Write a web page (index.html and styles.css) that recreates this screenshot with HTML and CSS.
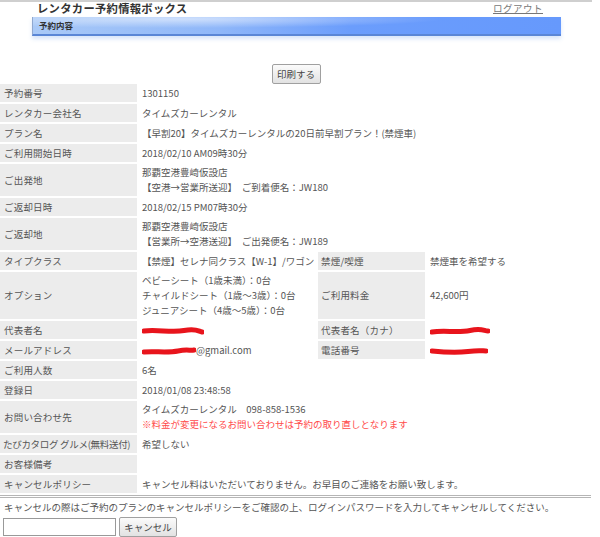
FILE: index.html
```html
<!DOCTYPE html>
<html lang="ja">
<head>
    <meta charset="UTF-8">
    <title>レンタカー予約情報ボックス</title>
    <link rel="stylesheet" href="styles.css">
</head>
<body>
    <!-- ヘッダー -->
    <header class="top">
        <h1>レンタカー予約情報ボックス</h1>
        <a href="#" class="logout">ログアウト</a>
    </header>
    <div class="bar">予約内容</div>

    <div class="print-area">
        <button type="button" class="btn-print">印刷する</button>
    </div>

    <!-- 予約内容 -->
    <table class="detail">
        <colgroup>
            <col class="c-label">
            <col class="c-value">
            <col class="c-label2">
            <col>
        </colgroup>
        <tr>
            <th>予約番号</th>
            <td colspan="3">1301150</td>
        </tr>
        <tr>
            <th>レンタカー会社名</th>
            <td colspan="3">タイムズカーレンタル</td>
        </tr>
        <tr>
            <th>プラン名</th>
            <td colspan="3">【早割20】タイムズカーレンタルの20日前早割プラン！(禁煙車)</td>
        </tr>
        <tr>
            <th>ご利用開始日時</th>
            <td colspan="3">2018/02/10 AM09時30分</td>
        </tr>
        <tr>
            <th>ご出発地</th>
            <td colspan="3">那覇空港豊崎仮設店<br>【空港→営業所送迎】　ご到着便名：JW180</td>
        </tr>
        <tr>
            <th>ご返却日時</th>
            <td colspan="3">2018/02/15 PM07時30分</td>
        </tr>
        <tr>
            <th>ご返却地</th>
            <td colspan="3">那覇空港豊崎仮設店<br>【営業所→空港送迎】　ご出発便名：JW189</td>
        </tr>
        <tr>
            <th>タイプクラス</th>
            <td>【禁煙】セレナ同クラス【W-1】/ワゴン</td>
            <th>禁煙/喫煙</th>
            <td>禁煙車を希望する</td>
        </tr>
        <tr>
            <th>オプション</th>
            <td>ベビーシート（1歳未満）：0台<br>チャイルドシート（1歳～3歳）：0台<br>ジュニアシート（4歳～5歳）：0台</td>
            <th>ご利用料金</th>
            <td>42,600円</td>
        </tr>
        <tr>
            <th>代表者名</th>
            <td><svg class="mask" width="62" height="8" viewBox="0 0 62 8"><path d="M2 4 C14 2 30 6 42 3.5 S56 4 60 5" /></svg></td>
            <th>代表者名（カナ）</th>
            <td><svg class="mask" width="60" height="8" viewBox="0 0 60 8"><path d="M2 5 C14 3 28 6 40 3.5 S54 4 58 4" /></svg></td>
        </tr>
        <tr>
            <th>メールアドレス</th>
            <td><svg class="mask" width="54" height="8" viewBox="0 0 54 8"><path d="M2 5 C12 4 26 6 36 4 S48 4 52 3" /></svg>@gmail.com</td>
            <th>電話番号</th>
            <td><svg class="mask" width="58" height="8" viewBox="0 0 58 8"><path d="M2 4 C12 5 26 6 38 4.5 S52 4 56 4" /></svg></td>
        </tr>
        <tr>
            <th>ご利用人数</th>
            <td colspan="3">6名</td>
        </tr>
        <tr>
            <th>登録日</th>
            <td colspan="3">2018/01/08 23:48:58</td>
        </tr>
        <tr>
            <th>お問い合わせ先</th>
            <td colspan="3">タイムズカーレンタル　098-858-1536<br><span class="note">※料金が変更になるお問い合わせは予約の取り直しとなります</span></td>
        </tr>
        <tr>
            <th class="tight">たびカタログ グルメ(無料送付)</th>
            <td colspan="3">希望しない</td>
        </tr>
        <tr>
            <th>お客様備考</th>
            <td colspan="3"></td>
        </tr>
        <tr>
            <th>キャンセルポリシー</th>
            <td colspan="3">キャンセル料はいただいておりません。お早目のご連絡をお願い致します。</td>
        </tr>
    </table>

    <!-- キャンセル -->
    <section class="cancel">
        <p>キャンセルの際はご予約のプランのキャンセルポリシーをご確認の上、ログインパスワードを入力してキャンセルしてください。</p>
        <form class="cancel-form">
            <input type="password" class="pw">
            <button type="button" class="btn-cancel">キャンセル</button>
        </form>
    </section>
</body>
</html>
```

FILE: styles.css
```css
/* 全体 */
body {
    margin: 0;
    font-family: "Noto Sans CJK JP", "Noto Sans", sans-serif;
    font-size: 9.5px;
    color: #555;
    background: #fff;
    width: 592px;
}

/* ヘッダー */
.top {
    display: flex;
    justify-content: space-between;
    align-items: flex-start;
    border-top: 2px solid #cfcfcf;
    width: 600px;
    box-sizing: border-box;
    padding: 0 57px 0 37px;
    height: 17px;
}

.top h1 {
    margin: 0;
    font-size: 11.3px;
    line-height: 13px;
    font-weight: bold;
    color: #333;
    letter-spacing: 0.3px;
}

.logout {
    color: #777;
    font-size: 9.5px;
    line-height: 12px;
    letter-spacing: 0.5px;
}

/* 青いバー */
.bar {
    margin: 0 0 0 32px;
    width: 529px;
    height: 19px;
    box-sizing: border-box;
    border-left: 1px solid #8fa8d0;
    border-bottom: 2px solid #5a86d6;
    padding-left: 6px;
    font-size: 8.5px;
    font-weight: bold;
    line-height: 17px;
    color: #333;
    background:
        radial-gradient(ellipse 260px 9px at 150px 2px, rgba(255,255,255,0.55), rgba(255,255,255,0) 100%),
        linear-gradient(to right, #a9c9f7 0%, #8fb7f9 35%, #6b9dfc 60%, #6699fc 100%);
    box-shadow: 0 3px 4px rgba(170, 200, 245, 0.45);
}

/* 印刷ボタン */
.print-area {
    text-align: center;
    padding-top: 28px;
    height: 18px;
}

.btn-print {
    height: 20px;
    width: 49px;
    padding: 0;
    font-family: inherit;
    font-size: 9.5px;
    color: #444;
    background: linear-gradient(#fbfbfb, #e2e2e2);
    border: 1px solid #a0a0a0;
    border-radius: 2px;
}

/* 詳細テーブル */
.detail {
    border-collapse: separate;
    border-spacing: 2px;
    margin-left: -2px;
    width: 594px;
    table-layout: fixed;
}

.c-label {
    width: 137px;
}

.c-value {
    width: 177px;
}

.c-label2 {
    width: 107px;
}

.detail th,
.detail td {
    height: 18px;
    padding: 1px 3px;
    line-height: 15px;
    text-align: left;
    vertical-align: middle;
    box-sizing: border-box;
    white-space: nowrap;
}

.detail th {
    background: #ececec;
    font-weight: normal;
    letter-spacing: 0.2px;
}

.detail th:first-child {
    padding-left: 4px;
}

.detail th.tight {
    letter-spacing: -0.3px;
    padding-left: 3px;
    padding-right: 0;
}

.note {
    color: #ff4b4b;
}

.mask {
    vertical-align: middle;
}

.mask path {
    fill: none;
    stroke: #e8141c;
    stroke-width: 5;
    stroke-linecap: round;
}

/* キャンセル */
.cancel {
    border-top: 3px double #b5b5b5;
    width: 591px;
}

.cancel p {
    margin: 0;
    padding: 3px 0 0 4px;
    line-height: 13px;
}

.cancel-form {
    display: flex;
    align-items: center;
    gap: 3px;
    padding: 3px 0 0 3px;
}

.pw {
    width: 113px;
    height: 18px;
    box-sizing: border-box;
    border: 1px solid #999;
    padding: 0;
    margin: 0;
}

.btn-cancel {
    height: 20px;
    width: 58px;
    padding: 0;
    font-family: inherit;
    font-size: 9.5px;
    color: #444;
    background: linear-gradient(#fbfbfb, #e2e2e2);
    border: 1px solid #a0a0a0;
    border-radius: 2px;
}
```
